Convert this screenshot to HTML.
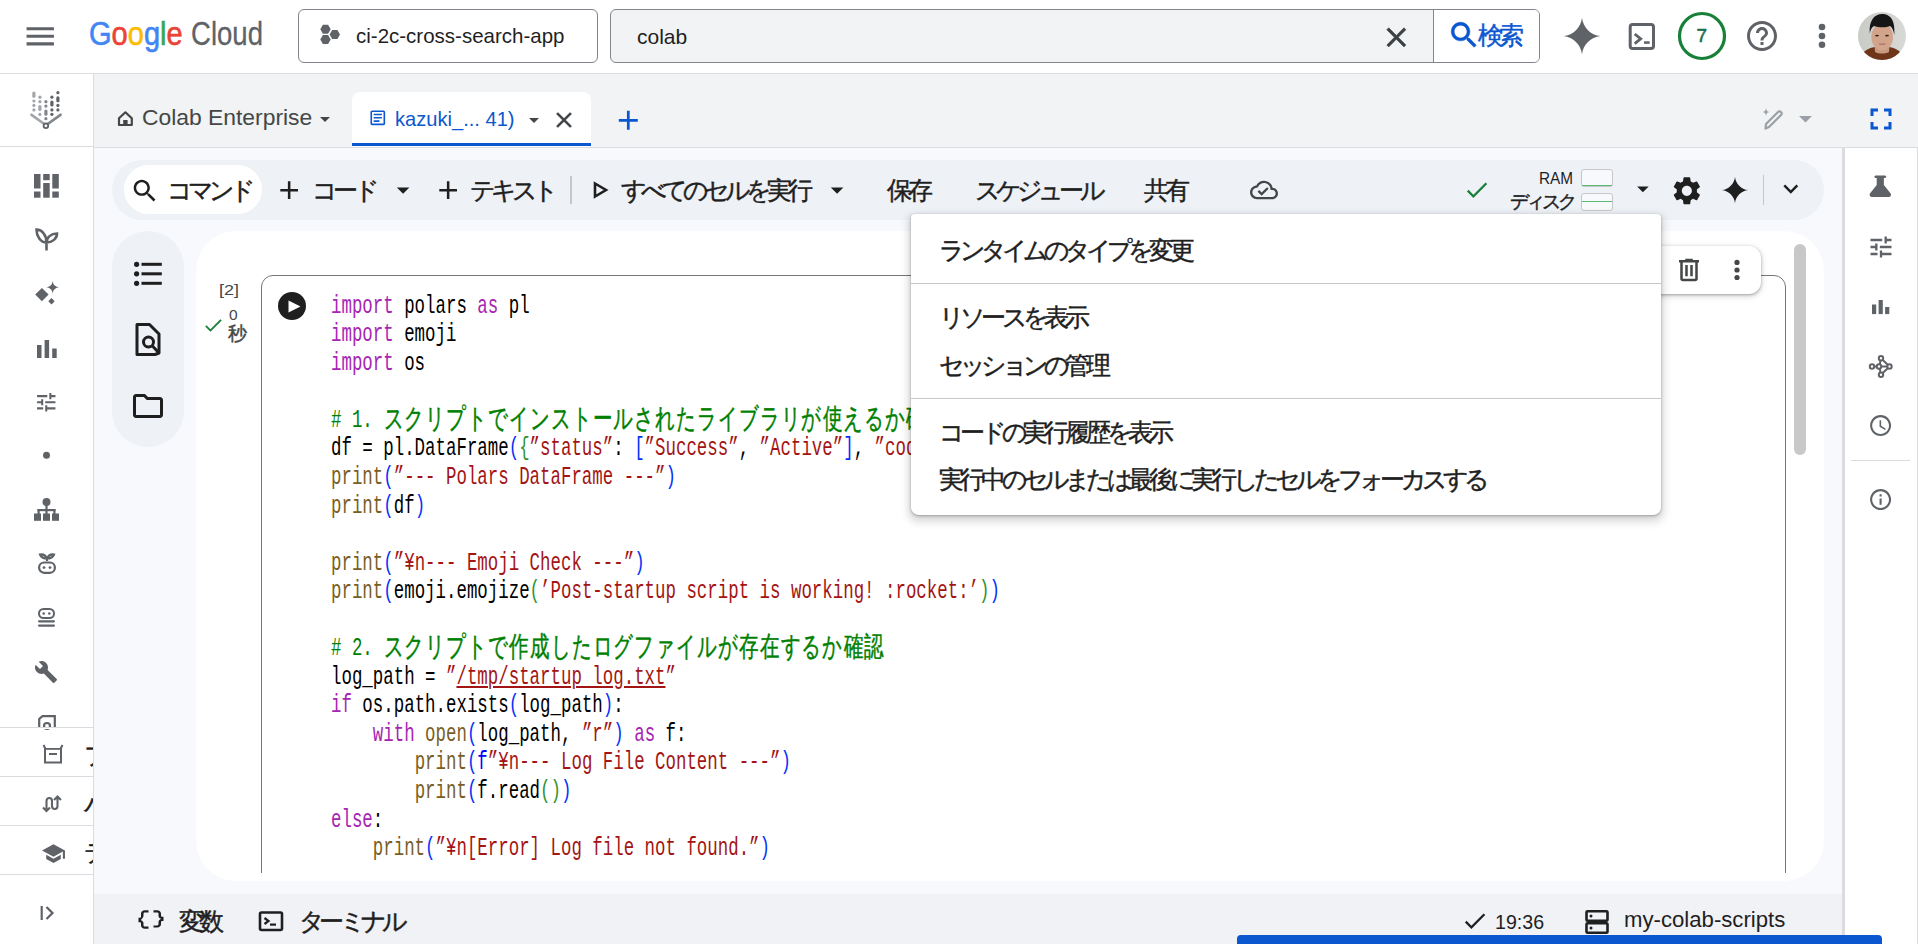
<!DOCTYPE html>
<html><head><meta charset="utf-8"><style>
*{box-sizing:border-box;margin:0;padding:0}
html,body{width:1918px;height:944px;overflow:hidden;background:#fff}
body{position:relative;font-family:"Liberation Sans",sans-serif;color:#1f1f1f}
.a{position:absolute}
i.j{font-style:normal;display:inline-block;width:.8333em;font-size:1.2em;text-align:center;vertical-align:-.04em;line-height:0;-webkit-text-stroke:.45px currentColor}
svg{position:absolute;display:block;overflow:visible}
.t{position:absolute;white-space:nowrap;line-height:1}
#code{position:absolute;left:331px;top:292.7px;font-family:"Liberation Mono",monospace;font-size:25px;line-height:28.55px;white-space:pre;transform:scaleX(.6967);transform-origin:0 0;color:#000}
#code i.j{font-family:"Liberation Sans",sans-serif;width:1.2em;font-size:1.1em;width:1.0909em}
.k{color:#a626b3}.f{color:#795e26}.s{color:#a31515}.c{color:#008000}.b{color:#0431fa}.g{color:#319331}.fb{color:#0000ff}
</style></head><body>
<div class="a" style="left:0px;top:0px;width:1918px;height:74px;background:#fff;border-bottom:1px solid #dadce0"></div>
<div class="a" style="left:94px;top:74px;width:1824px;height:74px;background:#f1f3f4;border-bottom:1px solid #dadce0"></div>
<div class="a" style="left:0px;top:74px;width:94px;height:870px;background:#fff;border-right:1px solid #dadce0"></div>
<div class="a" style="left:94px;top:148px;width:1748px;height:746px;background:#f8f9fc"></div>
<div class="a" style="left:94px;top:894px;width:1748px;height:50px;background:#f0f2f6"></div>
<div class="a" style="left:1842px;top:148px;width:76px;height:796px;background:#fff;border-left:3px solid #dadce0;border-right:1px solid #dadce0"></div>
<svg style="left:21.70px;top:17.90px;width:36.50px;height:36.50px" viewBox="0 0 24 24"><path fill="#5f6368" d="M3 18h18v-2H3v2zm0-5h18v-2H3v2zm0-7v2h18V6H3z"/></svg>
<div class="t" style="left:89.00px;top:17.46px;font-size:33px;color:#1f1f1f;transform:scaleX(0.88);transform-origin:0 0;-webkit-text-stroke:.6px currentColor"><span style="color:#4285f4">G</span><span style="color:#ea4335">o</span><span style="color:#fbbc04">o</span><span style="color:#4285f4">g</span><span style="color:#34a853">l</span><span style="color:#ea4335">e</span></div>
<div class="t" style="left:190.50px;top:17.46px;font-size:33px;color:#5f6368;transform:scaleX(0.835);transform-origin:0 0;-webkit-text-stroke:.3px currentColor">Cloud</div>
<div class="a" style="left:298px;top:9px;width:300px;height:54px;border:1px solid #80868b;border-radius:6px;background:#fff"></div>
<svg style="left:318.00px;top:22.00px;width:24.00px;height:26.00px" viewBox="0 0 24 26"><polygon points="12.70,7.30 10.10,11.80 4.90,11.80 2.30,7.30 4.90,2.80 10.10,2.80" fill="#5f6368"/><polygon points="22.00,12.40 19.40,16.90 14.20,16.90 11.60,12.40 14.20,7.90 19.40,7.90" fill="#5f6368"/><polygon points="12.70,17.60 10.10,22.10 4.90,22.10 2.30,17.60 4.90,13.10 10.10,13.10" fill="#5f6368"/></svg>
<div class="t" style="left:356.00px;top:25.02px;font-size:21px;color:#1f1f1f;transform:scaleX(0.976);transform-origin:0 0;">ci-2c-cross-search-app</div>
<div class="a" style="left:610px;top:9px;width:930px;height:54px;border:1px solid #80868b;border-radius:6px;background:#f1f3f4;overflow:hidden"></div>
<div class="a" style="left:1433px;top:10px;width:106px;height:52px;background:#fff;border-left:1px solid #80868b;border-radius:0 5px 5px 0"></div>
<div class="t" style="left:637.00px;top:25.62px;font-size:21px;color:#1f1f1f;">colab</div>
<svg style="left:1379.90px;top:21.20px;width:32.70px;height:32.70px" viewBox="0 0 24 24"><path fill="#3c4043" d="M19 6.41L17.59 5 12 10.59 6.41 5 5 6.41 10.59 12 5 17.59 6.41 19 12 13.41 17.59 19 19 17.59 13.41 12z" stroke="#3c4043" stroke-width=".45"/></svg>
<svg style="left:1446.70px;top:18.20px;width:34.30px;height:34.30px" viewBox="0 0 24 24"><path fill="#0b57d0" d="M15.5 14h-.79l-.28-.27C15.41 12.59 16 11.11 16 9.5 16 5.91 13.09 3 9.5 3S3 5.91 3 9.5 5.91 16 9.5 16c1.61 0 3.09-.59 4.23-1.57l.27.28v.79l5 4.99L20.49 19l-4.99-5zm-6 0C7.01 14 5 11.99 5 9.5S7.01 5 9.5 5 14 7.01 14 9.5 11.99 14 9.5 14z" stroke="#0b57d0" stroke-width=".4"/></svg>
<div class="t" style="left:1478.00px;top:25.22px;font-size:21px;color:#0b57d0;"><i class="j">検</i><i class="j">索</i></div>
<svg style="left:1560.50px;top:14.50px;width:42.00px;height:42.00px" viewBox="0 0 24 24"><path fill="#5f6368" d="M12 1.5C12.6 7 17 11.4 22.5 12 17 12.6 12.6 17 12 22.5 11.4 17 7 12.6 1.5 12 7 11.4 11.4 7 12 1.5z"/></svg>
<svg style="left:1626.00px;top:21.00px;width:32.00px;height:32.00px" viewBox="0 0 32 32"><rect x="4.2" y="3.5" width="23.3" height="24" rx="2.5" fill="none" stroke="#5f6368" stroke-width="3"/><path d="M8.7 13 L14.7 17.8 L8.7 22.7" fill="none" stroke="#5f6368" stroke-width="2.8"/><rect x="18" y="20.3" width="5.7" height="2.5" fill="#5f6368"/></svg>
<svg style="left:1676.00px;top:10.00px;width:52.00px;height:52.00px" viewBox="0 0 52 52"><circle cx="26" cy="26" r="22.5" fill="none" stroke="#188038" stroke-width="3.2"/></svg>
<div class="t" style="left:1696.50px;top:26.31px;font-size:19px;color:#1e6e50;-webkit-text-stroke:.6px currentColor">7</div>
<svg style="left:1744.00px;top:18.00px;width:36.00px;height:36.00px" viewBox="0 0 24 24"><path fill="#5f6368" d="M11 18h2v-2h-2v2zm1-16C6.48 2 2 6.48 2 12s4.48 10 10 10 10-4.48 10-10S17.52 2 12 2zm0 18c-4.41 0-8-3.59-8-8s3.59-8 8-8 8 3.59 8 8-3.59 8-8 8zm0-14c-2.21 0-4 1.79-4 4h2c0-1.1.9-2 2-2s2 .9 2 2c0 2-3 1.75-3 5h2c0-2.25 3-2.5 3-5 0-2.21-1.79-4-4-4z"/></svg>
<svg style="left:1812.00px;top:20.00px;width:20.00px;height:32.00px" viewBox="0 0 20 32"><circle cx="10" cy="7" r="3.3" fill="#5f6368"/><circle cx="10" cy="16" r="3.3" fill="#5f6368"/><circle cx="10" cy="24.8" r="3.3" fill="#5f6368"/></svg>
<svg style="left:1858.00px;top:12.00px;width:48.00px;height:48.00px" viewBox="0 0 48 48"><defs><clipPath id="av"><circle cx="24" cy="24" r="24"/></clipPath><linearGradient id="bg" x1="0" x2="1"><stop offset="0" stop-color="#c9cbc7"/><stop offset="1" stop-color="#d8d9d6"/></linearGradient></defs><g clip-path="url(#av)"><rect width="48" height="48" fill="url(#bg)"/><path d="M2 48 C4 38 12 35.5 18 35 L30 35 C36 35.5 44 38 46 48Z" fill="#6e3519"/><path d="M16.5 33 L31.5 33 L31 40 C27 42 21 42 17 40Z" fill="#c59a80"/><ellipse cx="24.2" cy="25" rx="10.8" ry="13.6" fill="#d1a48b"/><path d="M11.8 21.5 C10.5 8 17 2 24 2 C31.5 2 37.5 7 36.3 23 C35.5 19 34.5 15.5 32 14 C28 16 20 15.5 16 14 C13.5 15.5 12.5 18 11.8 21.5Z" fill="#161616"/><g fill="#3b2a24"><ellipse cx="19" cy="23.6" rx="2" ry="0.9"/><ellipse cx="29" cy="23.6" rx="2" ry="0.9"/></g><path d="M21 31.8 Q24.3 32.8 27.5 31.8" stroke="#a86e60" stroke-width="1.1" fill="none"/></g></svg>
<div class="a" style="left:0px;top:146px;width:93px;height:1px;background:#dadce0"></div>
<svg style="left:0.00px;top:0.00px;width:94.00px;height:140.00px" viewBox="0 0 94 140"><line x1="33.9" y1="93" x2="33.9" y2="96.2" stroke="#a2a6ab" stroke-width="3.2" stroke-linecap="round"/><circle cx="33.9" cy="101" r="1.6" fill="#a2a6ab"/><circle cx="33.9" cy="105.4" r="1.6" fill="#a2a6ab"/><circle cx="33.9" cy="109.9" r="1.6" fill="#a2a6ab"/><circle cx="39.9" cy="97.2" r="1.6" fill="#a2a6ab"/><circle cx="39.9" cy="101.7" r="1.6" fill="#a2a6ab"/><line x1="39.9" y1="106.5" x2="39.9" y2="109.4" stroke="#a2a6ab" stroke-width="3.2" stroke-linecap="round"/><circle cx="39.9" cy="114.4" r="1.6" fill="#a2a6ab"/><circle cx="45.9" cy="101.7" r="1.6" fill="#80868b"/><circle cx="45.9" cy="106.1" r="1.6" fill="#80868b"/><line x1="45.9" y1="111" x2="45.9" y2="114.2" stroke="#80868b" stroke-width="3.2" stroke-linecap="round"/><circle cx="45.9" cy="118.7" r="1.6" fill="#80868b"/><circle cx="51.9" cy="97.2" r="1.6" fill="#5f6368"/><line x1="51.9" y1="102" x2="51.9" y2="104.9" stroke="#5f6368" stroke-width="3.2" stroke-linecap="round"/><circle cx="51.9" cy="109.9" r="1.6" fill="#5f6368"/><circle cx="51.9" cy="114.3" r="1.6" fill="#5f6368"/><circle cx="57.9" cy="92.7" r="1.6" fill="#5f6368"/><line x1="57.9" y1="97.8" x2="57.9" y2="100.7" stroke="#5f6368" stroke-width="3.2" stroke-linecap="round"/><circle cx="57.9" cy="105.4" r="1.6" fill="#5f6368"/><circle cx="57.9" cy="109.9" r="1.6" fill="#5f6368"/><path d="M31.5 114.8 L45 124.5" stroke="#a2a6ab" stroke-width="2.7" stroke-linecap="round"/><path d="M60.5 114.8 L47 124.5" stroke="#80868b" stroke-width="2.7" stroke-linecap="round"/><circle cx="45.9" cy="125.8" r="2.3" fill="#fff" stroke="#5f6368" stroke-width="1.8"/></svg>
<svg style="left:33.70px;top:173.60px;width:25.00px;height:24.00px" viewBox="0 0 25 24"><g fill="#5f6368"><rect x="0" y="0" width="6.5" height="14.5"/><rect x="0" y="17.5" width="6.5" height="6.2"/><rect x="9.2" y="0" width="6.5" height="6.2"/><rect x="9.2" y="9" width="6.5" height="14.7"/><rect x="18.3" y="0" width="6.5" height="14.5"/><rect x="18.3" y="17.5" width="6.5" height="6.2"/></g></svg>
<svg style="left:35.00px;top:227.00px;width:23.00px;height:24.00px" viewBox="0 0 23 24"><path d="M11.5 23.5 V15 M11.5 15.5 C11.5 8 7 2.5 1.5 2.5 C1.5 9 5.5 15.5 11.5 15.5 M11.5 15.5 C11.5 10.5 16 6.5 22 6.5 C22 11.5 17.5 15.5 11.5 15.5" fill="none" stroke="#5f6368" stroke-width="2.6"/></svg>
<svg style="left:34.70px;top:280.00px;width:25.00px;height:25.00px" viewBox="0 0 25 25"><g fill="#5f6368"><path d="M0.2 14.6 L6.9 7.9 L13.6 14.6 L6.9 21.3Z"/><path d="M13.3 21.3 L16.5 18.1 L19.7 21.3 L16.5 24.5Z"/><path d="M17.7 0.7 C18.1 4.5 19.6 6.4 24.2 7.2 C19.6 8 18.1 9.9 17.7 13.7 C17.3 9.9 15.8 8 11.2 7.2 C15.8 6.4 17.3 4.5 17.7 0.7Z"/></g></svg>
<svg style="left:37.00px;top:339.70px;width:20.00px;height:18.00px" viewBox="0 0 20 18"><g fill="#5f6368"><rect x="0" y="5" width="4.5" height="13"/><rect x="7.6" y="0" width="4.5" height="18"/><rect x="15.2" y="8.5" width="4.5" height="9.5"/></g></svg>
<svg style="left:34.20px;top:389.50px;width:24.50px;height:24.50px" viewBox="0 0 24 24"><path fill="#5f6368" d="M3 17v2h6v-2H3zM3 5v2h10V5H3zm10 16v-2h8v-2h-8v-2h-2v6h2zM7 9v2H3v2h4v2h2V9H7zm14 4v-2H11v2h10zm-6-4h2V7h4V5h-4V3h-2v6z"/></svg>
<svg style="left:42.00px;top:451.00px;width:9.00px;height:9.00px" viewBox="0 0 9 9"><circle cx="4.5" cy="4.2" r="3.5" fill="#5f6368"/></svg>
<svg style="left:34.30px;top:497.90px;width:25.00px;height:23.00px" viewBox="0 0 25 23"><g fill="#5f6368"><circle cx="12.5" cy="4" r="4"/><rect x="11.4" y="6" width="2.2" height="6"/><rect x="3.5" y="11" width="18" height="2.2"/><rect x="3.5" y="11" width="2.2" height="5"/><rect x="19.3" y="11" width="2.2" height="5"/><rect x="11.4" y="11" width="2.2" height="5"/><rect x="0" y="15.5" width="7" height="7.3"/><rect x="9" y="15.5" width="7" height="7.3"/><rect x="18" y="15.5" width="7" height="7.3"/></g></svg>
<svg style="left:37.90px;top:553.00px;width:18.00px;height:21.00px" viewBox="0 0 18 21"><g fill="none" stroke="#5f6368" stroke-width="2.2"><path d="M9 8 V4 M9 5 C7 1.5 4 1 2 1.5 C3 4 5.5 5.5 9 5.5 M9 5 C11 1.5 14 1 16 1.5 C15 4 12.5 5.5 9 5.5"/><rect x="1.1" y="9.5" width="15.8" height="10.3" rx="5"/></g><g fill="#5f6368"><circle cx="6" cy="14.6" r="1.4"/><circle cx="12" cy="14.6" r="1.4"/></g></svg>
<svg style="left:38.40px;top:608.00px;width:17.00px;height:19.00px" viewBox="0 0 17 19"><g fill="none" stroke="#5f6368" stroke-width="2"><rect x="1" y="1" width="15" height="9" rx="4.5"/></g><g fill="#5f6368"><circle cx="5.7" cy="5.5" r="1.3"/><circle cx="11.3" cy="5.5" r="1.3"/><rect x="0" y="12.2" width="17" height="2.2" rx="1.1"/><rect x="0" y="16.5" width="17" height="2.2" rx="1.1"/></g></svg>
<svg style="left:34.00px;top:659.50px;width:24.00px;height:24.00px" viewBox="0 0 24 24"><path fill="#5f6368" d="M22.7 19l-9.1-9.1c.9-2.3.4-5-1.5-6.9-2-2-5-2.4-7.4-1.3L9 6 6 9 1.6 4.7C.4 7.1.9 10.1 2.9 12.1c1.9 1.9 4.6 2.4 6.9 1.5l9.1 9.1c.4.4 1 .4 1.4 0l2.3-2.3c.5-.4.5-1.1.1-1.4z"/></svg>
<svg style="left:37.90px;top:715.30px;width:18.00px;height:13.00px" viewBox="0 0 18 13"><path d="M1.2 13 V4 L4.5 1.2 H16.8 V13" fill="none" stroke="#5f6368" stroke-width="2.2"/><circle cx="9" cy="11" r="3" fill="none" stroke="#5f6368" stroke-width="2.2"/></svg>
<div class="a" style="left:0px;top:727px;width:93px;height:1px;background:#fff"></div>
<div class="a" style="left:0px;top:727px;width:93px;height:1px;background:#dadce0"></div>
<div class="a" style="left:0px;top:776px;width:93px;height:1px;background:#dadce0"></div>
<div class="a" style="left:0px;top:825px;width:93px;height:1px;background:#dadce0"></div>
<div class="a" style="left:0px;top:874px;width:93px;height:1px;background:#dadce0"></div>
<div class="a" style="left:0px;top:728px;width:93px;height:1px;background:#fff"></div>
<div class="a" style="left:0px;top:727px;width:93px;height:1px;background:#dadce0"></div>
<div class="a" style="left:0px;top:776px;width:93px;height:1px;background:#dadce0"></div>
<div class="a" style="left:0px;top:825px;width:93px;height:1px;background:#dadce0"></div>
<div class="a" style="left:0px;top:874px;width:93px;height:1px;background:#dadce0"></div>
<svg style="left:42.00px;top:744.00px;width:22.00px;height:20.00px" viewBox="0 0 22 20"><path d="M1.5 1 L3 4 V18.5 H19 V4 L20.5 1" fill="none" stroke="#5f6368" stroke-width="2"/><rect x="7" y="9" width="8" height="2" fill="#5f6368"/><rect x="3" y="4" width="16" height="1.8" fill="#5f6368"/></svg>
<svg style="left:42.00px;top:795.00px;width:22.00px;height:17.00px" viewBox="0 0 22 17"><path d="M4.5 16 V6 C4.5 2 10 2 10 6 V11 C10 15 15.5 15 15.5 11 V1.5 M1 12.5 L4.5 16 L8 12.5 M12 5 L15.5 1.5 L19 5" fill="none" stroke="#5f6368" stroke-width="2.1"/></svg>
<svg style="left:40.50px;top:840.50px;width:25.00px;height:25.00px" viewBox="0 0 24 24"><path fill="#5f6368" d="M5 13.18v4L12 21l7-3.82v-4L12 17l-7-3.82zM12 3L1 9l11 6 9-4.91V17h2V9L12 3z"/></svg>
<div class="a" style="left:0;top:728px;width:93px;height:150px;overflow:hidden">
<div class="t" style="left:84.00px;top:16.72px;font-size:21px;color:#1f1f1f;"><i class="j">フ</i><i class="j">ィ</i><i class="j">ー</i><i class="j">チ</i><i class="j">ャ</i><i class="j">ー</i></div>
<div class="t" style="left:84.00px;top:65.22px;font-size:21px;color:#1f1f1f;"><i class="j">パ</i><i class="j">イ</i><i class="j">プ</i><i class="j">ラ</i><i class="j">イ</i><i class="j">ン</i></div>
<div class="t" style="left:84.00px;top:114.22px;font-size:21px;color:#1f1f1f;"><i class="j">テ</i><i class="j">ン</i><i class="j">プ</i><i class="j">レ</i><i class="j">ー</i><i class="j">ト</i></div>
</div>
<div class="a" style="left:93px;top:728px;width:1px;height:216px;background:#dadce0"></div>
<svg style="left:40.00px;top:905.00px;width:16.00px;height:16.00px" viewBox="0 0 16 16"><rect x="0.6" y="1" width="2.2" height="14" fill="#5f6368"/><path d="M6.5 2 L12.5 8 L6.5 14" fill="none" stroke="#5f6368" stroke-width="2.2"/></svg>
<svg style="left:110.00px;top:105.00px;width:30.00px;height:26.00px" viewBox="0 0 30 26"><path d="M9 20 V13.3 L15.4 7.3 L21.8 13.3 V20 Z" fill="none" stroke="#444746" stroke-width="2.2" stroke-linejoin="round"/><rect x="13.2" y="15" width="4.4" height="5" fill="#444746"/></svg>
<div class="t" style="left:142.00px;top:107.42px;font-size:22.3px;color:#444746;transform:scaleX(1.025);transform-origin:0 0;">Colab Enterprise</div>
<svg style="left:313.00px;top:107.40px;width:24.00px;height:24.00px" viewBox="0 0 24 24"><path fill="#444746" d="M7 10l5 5 5-5z"/></svg>
<div class="a" style="left:352px;top:92px;width:239px;height:55px;background:#fff;border-radius:8px 8px 0 0"></div>
<div class="a" style="left:352px;top:143px;width:239px;height:3px;background:#0b57d0"></div>
<svg style="left:367.50px;top:108.30px;width:19.60px;height:19.60px" viewBox="0 0 24 24"><path fill="#0b57d0" d="M19 5v14H5V5h14m0-2H5c-1.1 0-2 .9-2 2v14c0 1.1.9 2 2 2h14c1.1 0 2-.9 2-2V5c0-1.1-.9-2-2-2zM14 17H7v-2h7v2zm3-4H7v-2h10v2zm0-4H7V7h10v2z"/></svg>
<div class="t" style="left:394.50px;top:107.52px;font-size:21px;color:#0b57d0;transform:scaleX(0.957);transform-origin:0 0;">kazuki_... 41)</div>
<svg style="left:522.00px;top:107.50px;width:24.00px;height:24.00px" viewBox="0 0 24 24"><path fill="#444746" d="M7 10l5 5 5-5z"/></svg>
<svg style="left:551.30px;top:107.10px;width:26.00px;height:26.00px" viewBox="0 0 24 24"><path fill="#3c4043" d="M19 6.41L17.59 5 12 10.59 6.41 5 5 6.41 10.59 12 5 17.59 6.41 19 12 13.41 17.59 19 19 17.59 13.41 12z" stroke="#3c4043" stroke-width=".4"/></svg>
<svg style="left:612.00px;top:103.70px;width:32.60px;height:32.60px" viewBox="0 0 24 24"><path fill="#0b57d0" d="M19 13h-6v6h-2v-6H5v-2h6V5h2v6h6v2z"/></svg>
<svg style="left:1761.00px;top:108.00px;width:24.00px;height:22.00px" viewBox="0 0 24 22"><g fill="#9aa0a6"><path d="M5 0 C5.3 2.7 6.3 3.7 9 4 C6.3 4.3 5.3 5.3 5 8 C4.7 5.3 3.7 4.3 1 4 C3.7 3.7 4.7 2.7 5 0Z"/></g><path d="M4.5 20.5 L5 16 L17 4 Q18.5 2.5 20 4 Q21.5 5.5 20 7 L8 19 Z" fill="none" stroke="#9aa0a6" stroke-width="2.2" stroke-linejoin="round"/></svg>
<svg style="left:1789.90px;top:102.60px;width:31.00px;height:31.00px" viewBox="0 0 24 24"><path fill="#9aa0a6" d="M7 10l5 5 5-5z"/></svg>
<svg style="left:1862.50px;top:101.30px;width:36.00px;height:36.00px" viewBox="0 0 24 24"><path fill="#0b57d0" d="M7 14H5v5h5v-2H7v-3zm-2-4h2V7h3V5H5v5zm12 7h-3v2h5v-5h-2v3zM14 5v2h3v3h2V5h-5z"/></svg>
<div class="a" style="left:112px;top:160px;width:1712px;height:60px;border-radius:30px;background:#eef1f6"></div>
<div class="a" style="left:124px;top:165px;width:138px;height:49px;border-radius:25px;background:#fff"></div>
<svg style="left:130.20px;top:176.10px;width:29.80px;height:29.80px" viewBox="0 0 24 24"><path fill="#1f1f1f" d="M15.5 14h-.79l-.28-.27C15.41 12.59 16 11.11 16 9.5 16 5.91 13.09 3 9.5 3S3 5.91 3 9.5 5.91 16 9.5 16c1.61 0 3.09-.59 4.23-1.57l.27.28v.79l5 4.99L20.49 19l-4.99-5zm-6 0C7.01 14 5 11.99 5 9.5S7.01 5 9.5 5 14 7.01 14 9.5 11.99 14 9.5 14z"/></svg>
<div class="t" style="left:167.00px;top:180.42px;font-size:21px;color:#1f1f1f;"><i class="j">コ</i><i class="j">マ</i><i class="j">ン</i><i class="j">ド</i></div>
<svg style="left:274.00px;top:174.70px;width:30.30px;height:30.30px" viewBox="0 0 24 24"><path fill="#1f1f1f" d="M19 13h-6v6h-2v-6H5v-2h6V5h2v6h6v2z"/></svg>
<div class="t" style="left:312.00px;top:180.42px;font-size:21px;color:#1f1f1f;"><i class="j">コ</i><i class="j">ー</i><i class="j">ド</i></div>
<svg style="left:387.60px;top:175.40px;width:30.20px;height:30.20px" viewBox="0 0 24 24"><path fill="#1f1f1f" d="M7 10l5 5 5-5z"/></svg>
<svg style="left:432.70px;top:174.70px;width:30.30px;height:30.30px" viewBox="0 0 24 24"><path fill="#1f1f1f" d="M19 13h-6v6h-2v-6H5v-2h6V5h2v6h6v2z"/></svg>
<div class="t" style="left:470.00px;top:180.42px;font-size:21px;color:#1f1f1f;"><i class="j">テ</i><i class="j">キ</i><i class="j">ス</i><i class="j">ト</i></div>
<div class="a" style="left:570px;top:176px;width:2px;height:28px;background:#c4c7c5"></div>
<svg style="left:590.00px;top:180.00px;width:20.00px;height:20.00px" viewBox="0 0 20 20"><path d="M5 3.5 L16 10 L5 16.5Z" fill="none" stroke="#1f1f1f" stroke-width="2.6" stroke-linejoin="miter"/></svg>
<div class="t" style="left:620.50px;top:180.42px;font-size:21px;color:#1f1f1f;"><i class="j">す</i><i class="j">べ</i><i class="j">て</i><i class="j">の</i><i class="j">セ</i><i class="j">ル</i><i class="j">を</i><i class="j">実</i><i class="j">行</i></div>
<svg style="left:822.00px;top:175.40px;width:30.20px;height:30.20px" viewBox="0 0 24 24"><path fill="#1f1f1f" d="M7 10l5 5 5-5z"/></svg>
<div class="t" style="left:887.00px;top:180.42px;font-size:21px;color:#1f1f1f;"><i class="j">保</i><i class="j">存</i></div>
<div class="t" style="left:975.00px;top:180.42px;font-size:21px;color:#1f1f1f;"><i class="j">ス</i><i class="j">ケ</i><i class="j">ジ</i><i class="j">ュ</i><i class="j">ー</i><i class="j">ル</i></div>
<div class="t" style="left:1144.00px;top:180.42px;font-size:21px;color:#1f1f1f;"><i class="j">共</i><i class="j">有</i></div>
<svg style="left:1250.00px;top:175.90px;width:28.00px;height:28.00px" viewBox="0 0 24 24"><path fill="#444746" d="M19.35 10.04C18.67 6.59 15.64 4 12 4 9.11 4 6.6 5.64 5.35 8.04 2.34 8.36 0 10.91 0 14c0 3.31 2.69 6 6 6h13c2.76 0 5-2.24 5-5 0-2.64-2.05-4.78-4.65-4.96zM19 18H6c-2.21 0-4-1.79-4-4 0-2.05 1.53-3.76 3.56-3.97l1.07-.11.5-.95C8.08 7.14 9.94 6 12 6c2.62 0 4.88 1.86 5.39 4.43l.3 1.5 1.53.11c1.56.1 2.78 1.41 2.78 2.96 0 1.65-1.35 3-3 3zm-9-3.82l-2.09-2.09L6.5 13.5 10 17l6.01-6.01-1.41-1.41z"/></svg>
<svg style="left:1462.80px;top:176.00px;width:27.70px;height:27.70px" viewBox="0 0 24 24"><path fill="#188038" d="M9 16.17L4.83 12l-1.42 1.41L9 19 21 7l-1.41-1.41z"/></svg>
<div class="t" style="left:1538.50px;top:170.23px;font-size:16.5px;color:#1f1f1f;transform:scaleX(0.93);transform-origin:0 0;">RAM</div>
<div class="t" style="left:1510.00px;top:194.65px;font-size:16px;color:#1f1f1f;"><i class="j">デ</i><i class="j">ィ</i><i class="j">ス</i><i class="j">ク</i></div>
<div class="a" style="left:1581px;top:169px;width:32px;height:18px;border:1px solid #c4c7c5;border-radius:3px;background:#f8f9fc"></div>
<div class="a" style="left:1582px;top:184.5px;width:30px;height:1.5px;background:#5bb974"></div>
<div class="a" style="left:1581px;top:193px;width:32px;height:18px;border:1px solid #c4c7c5;border-radius:3px;background:#f8f9fc"></div>
<div class="a" style="left:1582px;top:200.5px;width:30px;height:1.5px;background:#5bb974"></div>
<svg style="left:1628.60px;top:175.40px;width:27.80px;height:27.80px" viewBox="0 0 24 24"><path fill="#1f1f1f" d="M7 10l5 5 5-5z"/></svg>
<svg style="left:1670.10px;top:173.90px;width:33.70px;height:33.70px" viewBox="0 0 24 24"><path fill="#1f1f1f" d="M19.14 12.94c.04-.3.06-.61.06-.94 0-.32-.02-.64-.07-.94l2.03-1.58c.18-.14.23-.41.12-.61l-1.92-3.32c-.12-.22-.37-.29-.59-.22l-2.39.96c-.5-.38-1.03-.7-1.62-.94l-.36-2.54c-.04-.24-.24-.41-.48-.41h-3.84c-.24 0-.43.17-.47.41l-.36 2.54c-.59.24-1.13.57-1.62.94l-2.39-.96c-.22-.08-.47 0-.59.22L2.74 8.87c-.12.21-.08.47.12.61l2.03 1.58c-.05.3-.09.63-.09.94s.02.64.07.94l-2.03 1.58c-.18.14-.23.41-.12.61l1.92 3.32c.12.22.37.29.59.22l2.39-.96c.5.38 1.03.7 1.62.94l.36 2.54c.05.24.24.41.48.41h3.84c.24 0 .44-.17.47-.41l.36-2.54c.59-.24 1.13-.56 1.62-.94l2.39.96c.22.08.47 0 .59-.22l1.92-3.32c.12-.22.07-.47-.12-.61l-2.01-1.58zM12 15.6c-1.98 0-3.6-1.62-3.6-3.6s1.62-3.6 3.6-3.6 3.6 1.62 3.6 3.6-1.62 3.6-3.6 3.6z"/></svg>
<svg style="left:1720.00px;top:175.00px;width:30.00px;height:30.00px" viewBox="0 0 24 24"><path fill="#1f1f1f" d="M12 1.5C12.6 7 17 11.4 22.5 12 17 12.6 12.6 17 12 22.5 11.4 17 7 12.6 1.5 12 7 11.4 11.4 7 12 1.5z"/></svg>
<div class="a" style="left:1763px;top:175px;width:1px;height:30px;background:#c4c7c5"></div>
<svg style="left:1776.30px;top:174.40px;width:29.60px;height:29.60px" viewBox="0 0 24 24"><path fill="#1f1f1f" d="M16.59 8.59L12 13.17 7.41 8.59 6 10l6 6 6-6z"/></svg>
<div class="a" style="left:112px;top:231px;width:72px;height:216px;border-radius:36px;background:#eef1f6"></div>
<svg style="left:130.00px;top:258.00px;width:36.00px;height:30.00px" viewBox="0 0 36 30"><g fill="#1f1f1f"><circle cx="6.6" cy="6.3" r="2.6"/><circle cx="6.6" cy="15.8" r="2.6"/><circle cx="6.6" cy="25.3" r="2.6"/><rect x="11.5" y="4.8" width="20.3" height="3"/><rect x="11.5" y="14.3" width="20.3" height="3"/><rect x="11.5" y="23.8" width="20.3" height="3"/></g></svg>
<svg style="left:134.00px;top:323.00px;width:28.00px;height:33.00px" viewBox="0 0 28 33"><path d="M3 1.5 H15.5 L25 11 V30 L21 31.5 H3 Z" fill="none" stroke="#1f1f1f" stroke-width="3" stroke-linejoin="round"/><circle cx="14.5" cy="19" r="5" fill="none" stroke="#1f1f1f" stroke-width="3"/><path d="M18 22.5 L25 30" stroke="#1f1f1f" stroke-width="3"/></svg>
<svg style="left:129.50px;top:388.00px;width:36.00px;height:36.00px" viewBox="0 0 24 24"><path fill="#1f1f1f" d="M9.17 6l2 2H20v10H4V6h5.17M10 4H4c-1.1 0-1.99.9-1.99 2L2 18c0 1.1.9 2 2 2h16c1.1 0 2-.9 2-2V8c0-1.1-.9-2-2-2h-8l-2-2z"/></svg>
<div class="a" style="left:196px;top:231px;width:1628px;height:650px;border-radius:40px;background:#fff"></div>
<div class="a" style="left:196px;top:231px;width:1628px;height:642px;overflow:hidden">
<div class="a" style="left:65px;top:44px;width:1525px;height:700px;border:1px solid #747775;border-radius:12px"></div>
</div>
<div class="t" style="left:219.00px;top:281.60px;font-size:15px;color:#444746;transform:scaleX(1.2);transform-origin:0 0;">[2]</div>
<svg style="left:202.30px;top:313.70px;width:22.50px;height:22.50px" viewBox="0 0 24 24"><path fill="#188038" d="M9 16.17L4.83 12l-1.42 1.41L9 19 21 7l-1.41-1.41z"/></svg>
<div class="t" style="left:229.00px;top:307.28px;font-size:15.5px;color:#444746;">0</div>
<div class="t" style="left:228.00px;top:325.98px;font-size:15.5px;color:#444746;"><i class="j">秒</i></div>
<svg style="left:278.00px;top:292.00px;width:28.00px;height:28.00px" viewBox="0 0 28 28"><circle cx="14" cy="14" r="14" fill="#1f1f1f"/><path d="M10.5 8.5 L22.5 14.5 L10.5 20.5Z" fill="#fff"/></svg>
<div class="a" style="left:1794px;top:244px;width:12px;height:211px;border-radius:6px;background:#c8c8c8"></div>
<div id="code"><span class="k">import</span> polars <span class="k">as</span> pl
<span class="k">import</span> emoji
<span class="k">import</span> os

<span class="c"># 1. <i class="j">ス</i><i class="j">ク</i><i class="j">リ</i><i class="j">プ</i><i class="j">ト</i><i class="j">で</i><i class="j">イ</i><i class="j">ン</i><i class="j">ス</i><i class="j">ト</i><i class="j">ー</i><i class="j">ル</i><i class="j">さ</i><i class="j">れ</i><i class="j">た</i><i class="j">ラ</i><i class="j">イ</i><i class="j">ブ</i><i class="j">ラ</i><i class="j">リ</i><i class="j">が</i><i class="j">使</i><i class="j">え</i><i class="j">る</i><i class="j">か</i><i class="j">確</i><i class="j">認</i></span>
df = pl.DataFrame<span class="b">(</span><span class="g">{</span><span class="s">”status”</span>: <span class="b">[</span><span class="s">”Success”</span>, <span class="s">”Active”</span><span class="b">]</span>, <span class="s">”code”</span>: <span class="b">[</span>200, 201<span class="b">]</span><span class="g">}</span><span class="b">)</span>
<span class="f">print</span><span class="b">(</span><span class="s">”--- Polars DataFrame ---”</span><span class="b">)</span>
<span class="f">print</span><span class="b">(</span>df<span class="b">)</span>

<span class="f">print</span><span class="b">(</span><span class="s">”¥n--- Emoji Check ---”</span><span class="b">)</span>
<span class="f">print</span><span class="b">(</span>emoji.emojize<span class="g">(</span><span class="s">’Post-startup script is working! :rocket:’</span><span class="g">)</span><span class="b">)</span>

<span class="c"># 2. <i class="j">ス</i><i class="j">ク</i><i class="j">リ</i><i class="j">プ</i><i class="j">ト</i><i class="j">で</i><i class="j">作</i><i class="j">成</i><i class="j">し</i><i class="j">た</i><i class="j">ロ</i><i class="j">グ</i><i class="j">フ</i><i class="j">ァ</i><i class="j">イ</i><i class="j">ル</i><i class="j">が</i><i class="j">存</i><i class="j">在</i><i class="j">す</i><i class="j">る</i><i class="j">か</i><i class="j">確</i><i class="j">認</i></span>
log_path = <span class="s">”<u>/tmp/startup_log.txt</u>”</span>
<span class="k">if</span> os.path.exists<span class="b">(</span>log_path<span class="b">)</span>:
    <span class="k">with</span> <span class="f">open</span><span class="b">(</span>log_path, <span class="s">”r”</span><span class="b">)</span> <span class="k">as</span> f:
        <span class="f">print</span><span class="b">(</span><span class="fb">f</span><span class="s">”¥n--- Log File Content ---”</span><span class="b">)</span>
        <span class="f">print</span><span class="b">(</span>f.read<span class="g">()</span><span class="b">)</span>
<span class="k">else</span>:
    <span class="f">print</span><span class="b">(</span><span class="s">”¥n[Error] Log file not found.”</span><span class="b">)</span></div>
<div class="a" style="left:1540px;top:246px;width:221px;height:48px;border-radius:12px;background:#fff;box-shadow:0 1px 3px rgba(0,0,0,.3),0 2px 6px 1px rgba(0,0,0,.12)"></div>
<svg style="left:1674.00px;top:255.30px;width:30.00px;height:30.00px" viewBox="0 -960 960 960"><path fill="#444746" d="M280-120q-33 0-56.5-23.5T200-200v-520h-40v-80h200v-40h240v40h200v80h-40v520q0 33-23.5 56.5T680-120H280Zm400-600H280v520h400v-520ZM360-280h80v-360h-80v360Zm160 0h80v-360h-80v360Z"/></svg>
<svg style="left:1731.00px;top:258.00px;width:12.00px;height:24.00px" viewBox="0 0 12 24"><g fill="#444746"><circle cx="6" cy="4.4" r="2.6"/><circle cx="6" cy="12" r="2.6"/><circle cx="6" cy="19.5" r="2.6"/></g></svg>
<svg style="left:135.90px;top:907.00px;width:30.00px;height:26.00px" viewBox="0 0 24 24" preserveAspectRatio="none"><path fill="#1f1f1f" d="M4 7v2c0 .55-.45 1-1 1H2v4h1c.55 0 1 .45 1 1v2c0 1.65 1.35 3 3 3h3v-2H7c-.55 0-1-.45-1-1v-2c0-1.3-.84-2.42-2-2.83v-.34C5.16 10.42 6 9.3 6 8V6c0-.55.45-1 1-1h3V3H7C5.35 3 4 4.35 4 6v1zM20 7V6c0-1.65-1.35-3-3-3h-3v2h3c.55 0 1 .45 1 1v2c0 1.3.84 2.42 2 2.83v.34c-1.16.41-2 1.52-2 2.83v2c0 .55-.45 1-1 1h-3v2h3c1.65 0 3-1.35 3-3v-2c0-.55.45-1 1-1h1v-4h-1c-.55 0-1-.45-1-1z"/></svg>
<div class="t" style="left:178.50px;top:910.92px;font-size:21px;color:#1f1f1f;"><i class="j">変</i><i class="j">数</i></div>
<svg style="left:257.00px;top:910.00px;width:28.00px;height:22.00px" viewBox="0 0 28 22"><rect x="3" y="2.5" width="22" height="17.5" rx="1.5" fill="none" stroke="#1f1f1f" stroke-width="2.6"/><path d="M7.5 8 L11.5 11 L7.5 14" fill="none" stroke="#1f1f1f" stroke-width="2.2"/><rect x="13" y="13.5" width="6" height="2.2" fill="#1f1f1f"/></svg>
<div class="t" style="left:298.50px;top:910.92px;font-size:21px;color:#1f1f1f;"><i class="j">タ</i><i class="j">ー</i><i class="j">ミ</i><i class="j">ナ</i><i class="j">ル</i></div>
<svg style="left:1461.00px;top:907.00px;width:27.70px;height:27.70px" viewBox="0 0 24 24"><path fill="#1f1f1f" d="M9 16.17L4.83 12l-1.42 1.41L9 19 21 7l-1.41-1.41z"/></svg>
<div class="t" style="left:1495.00px;top:910.62px;font-size:21px;color:#1f1f1f;transform:scaleX(0.935);transform-origin:0 0;">19:36</div>
<svg style="left:1584.00px;top:908.50px;width:26.00px;height:26.00px" viewBox="0 0 26 26"><g fill="none" stroke="#1f1f1f" stroke-width="2.6"><rect x="2.5" y="2.3" width="21" height="9.5" rx="1"/><rect x="2.5" y="14.2" width="21" height="9.5" rx="1"/></g><g fill="#1f1f1f"><circle cx="7" cy="7" r="1.5"/><circle cx="7" cy="19" r="1.5"/></g></svg>
<div class="t" style="left:1624.00px;top:908.95px;font-size:22.5px;color:#1f1f1f;transform:scaleX(0.985);transform-origin:0 0;">my-colab-scripts</div>
<svg style="left:1866.00px;top:171.50px;width:28.60px;height:28.60px" viewBox="0 -960 960 960"><path fill="#5f6368" d="M200-120q-51 0-72.5-45.5T138-250l222-270v-240h-40q-17 0-28.5-11.5T280-800q0-17 11.5-28.5T320-840h320q17 0 28.5 11.5T680-800q0 17-11.5 28.5T640-760h-40v240l222 270q32 39 10.5 84.5T760-120H200Z"/></svg>
<svg style="left:1866.50px;top:232.90px;width:28.00px;height:28.00px" viewBox="0 0 24 24"><path fill="#5f6368" d="M3 17v2h6v-2H3zM3 5v2h10V5H3zm10 16v-2h8v-2h-8v-2h-2v6h2zM7 9v2H3v2h4v2h2V9H7zm14 4v-2H11v2h10zm-6-4h2V7h4V5h-4V3h-2v6z"/></svg>
<svg style="left:1871.80px;top:299.50px;width:18.00px;height:15.00px" viewBox="0 0 18 15"><g fill="#5f6368"><rect x="0" y="4.5" width="4.2" height="9.6"/><rect x="6.6" y="0" width="4.2" height="14.1"/><rect x="13.1" y="7" width="4.2" height="7.1"/></g></svg>
<svg style="left:1869.00px;top:354.50px;width:24.00px;height:23.00px" viewBox="0 0 24 23"><g fill="none" stroke="#5f6368" stroke-width="2"><circle cx="3" cy="11.5" r="2.2"/><circle cx="10" cy="11.5" r="2.2"/><circle cx="12" cy="3.2" r="2.2"/><circle cx="12" cy="19.8" r="2.2"/><circle cx="20.5" cy="11.5" r="2.2"/><path d="M5.2 11.5 H7.8 M12.2 11.5 H18.3 M11.5 5.4 L10.8 9.3 M11.5 17.6 L10.8 13.7 M13.5 4.8 L19 10 M13.5 18.2 L19 13"/></g></svg>
<svg style="left:1867.90px;top:412.90px;width:25.20px;height:25.20px" viewBox="0 0 24 24"><path fill="#5f6368" d="M11.99 2C6.47 2 2 6.48 2 12s4.47 10 9.99 10C17.52 22 22 17.52 22 12S17.52 2 11.99 2zM12 20c-4.42 0-8-3.58-8-8s3.58-8 8-8 8 3.58 8 8-3.58 8-8 8zm.5-13H11v6l5.25 3.15.75-1.23-4.5-2.67z"/></svg>
<div class="a" style="left:1851px;top:460px;width:59px;height:1px;background:#dadce0"></div>
<svg style="left:1867.90px;top:486.50px;width:25.20px;height:25.20px" viewBox="0 0 24 24"><path fill="#5f6368" d="M11 7h2v2h-2zm0 4h2v6h-2zm1-9C6.48 2 2 6.48 2 12s4.48 10 10 10 10-4.48 10-10S17.52 2 12 2zm0 18c-4.41 0-8-3.59-8-8s3.59-8 8-8 8 3.59 8 8-3.59 8-8 8z"/></svg>
<div class="a" style="left:911px;top:214px;width:750px;height:301px;background:#fff;border-radius:4px 4px 8px 8px;box-shadow:0 1px 3px rgba(0,0,0,.3),0 4px 8px 3px rgba(0,0,0,.15)"></div>
<div class="t" style="left:939.00px;top:239.62px;font-size:21px;color:#1f1f1f;"><i class="j">ラ</i><i class="j">ン</i><i class="j">タ</i><i class="j">イ</i><i class="j">ム</i><i class="j">の</i><i class="j">タ</i><i class="j">イ</i><i class="j">プ</i><i class="j">を</i><i class="j">変</i><i class="j">更</i></div>
<div class="a" style="left:911px;top:283px;width:750px;height:1px;background:#c7c7c7"></div>
<div class="t" style="left:939.00px;top:306.82px;font-size:21px;color:#1f1f1f;"><i class="j">リ</i><i class="j">ソ</i><i class="j">ー</i><i class="j">ス</i><i class="j">を</i><i class="j">表</i><i class="j">示</i></div>
<div class="t" style="left:939.00px;top:354.72px;font-size:21px;color:#1f1f1f;"><i class="j">セ</i><i class="j">ッ</i><i class="j">シ</i><i class="j">ョ</i><i class="j">ン</i><i class="j">の</i><i class="j">管</i><i class="j">理</i></div>
<div class="a" style="left:911px;top:398px;width:750px;height:1px;background:#c7c7c7"></div>
<div class="t" style="left:939.00px;top:422.12px;font-size:21px;color:#1f1f1f;"><i class="j">コ</i><i class="j">ー</i><i class="j">ド</i><i class="j">の</i><i class="j">実</i><i class="j">行</i><i class="j">履</i><i class="j">歴</i><i class="j">を</i><i class="j">表</i><i class="j">示</i></div>
<div class="t" style="left:939.00px;top:469.42px;font-size:21px;color:#1f1f1f;"><i class="j">実</i><i class="j">行</i><i class="j">中</i><i class="j">の</i><i class="j">セ</i><i class="j">ル</i><i class="j">ま</i><i class="j">た</i><i class="j">は</i><i class="j">最</i><i class="j">後</i><i class="j">に</i><i class="j">実</i><i class="j">行</i><i class="j">し</i><i class="j">た</i><i class="j">セ</i><i class="j">ル</i><i class="j">を</i><i class="j">フ</i><i class="j">ォ</i><i class="j">ー</i><i class="j">カ</i><i class="j">ス</i><i class="j">す</i><i class="j">る</i></div>
<div class="a" style="left:1237px;top:935px;width:645px;height:9px;background:#0b57d0;border-radius:4px 4px 0 0"></div>
</body></html>
